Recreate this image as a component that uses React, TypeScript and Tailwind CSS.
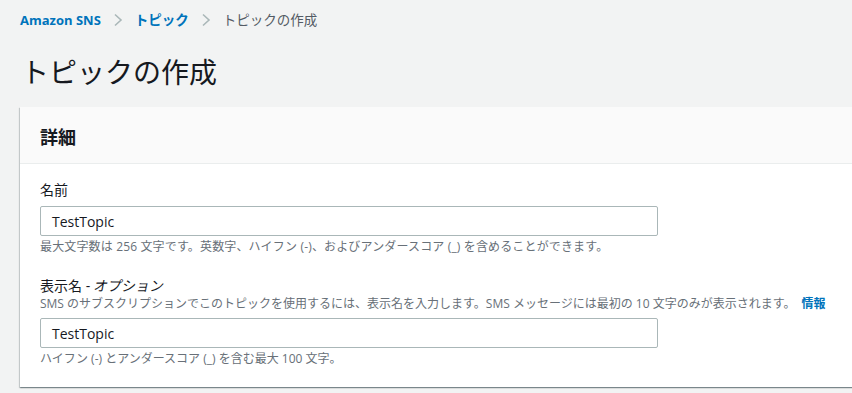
import React from "react";

const font = {
  fontFamily: '"Open Sans", "Noto Sans CJK JP", sans-serif',
};

function Chevron() {
  return (
    <svg width="10" height="14" viewBox="0 0 10 14" className="mx-[12px]">
      <path d="M2 1.5 L8 7 L2 12.5" fill="none" stroke="#aab7b8" strokeWidth="1.6" />
    </svg>
  );
}

export default function App() {
  return (
    <div
      className="w-[852px] h-[393px] overflow-hidden bg-[#f2f3f3] text-[#16191f]"
      style={font}
    >
      <div className="pl-[20px] pt-[11px] flex items-center h-[18px] box-content text-[13px] leading-[18px]">
        <span className="text-[#0073bb] font-bold">Amazon SNS</span>
        <Chevron />
        <span className="text-[#0073bb] font-bold text-[13.5px]">トピック</span>
        <Chevron />
        <span className="text-[#545b64] text-[13.5px]">トピックの作成</span>
      </div>
      <h1 className="pl-[21px] mt-[25px] text-[28px] leading-[36px] font-normal">
        トピックの作成
      </h1>
      <div className="ml-[20px] mt-[17px] w-[900px] bg-white shadow-[0_1px_1px_0_rgba(0,28,36,0.3),1px_1px_1px_0_rgba(0,28,36,0.15),-1px_1px_1px_0_rgba(0,28,36,0.15)]">
        <div className="h-[57px] bg-[#fafafa] border-b border-[#eaeded] flex items-center pl-[20px]">
          <h2 className="text-[18px] font-bold leading-[24px] pt-[3px]">詳細</h2>
        </div>
        <div className="pl-[20px] pt-[16px] pb-[20px]">
          <div className="text-[14px] leading-[20px]">名前</div>
          <div className="mt-[6px] w-[618px] h-[30px] border border-[#aab7b8] rounded-[2px] flex items-center pl-[11px] text-[14px] font-medium">
            TestTopic
          </div>
          <div className="mt-[3px] text-[12px] leading-[16px] tracking-[0.15px] text-[#687078]">
            最大文字数は 256 文字です。英数字、ハイフン (-)、およびアンダースコア (_) を含めることができます。
          </div>
          <div className="mt-[21px] text-[14px] leading-[20px]">
            表示名 - <span className="inline-block -skew-x-[12deg]">オプション</span>
          </div>
          <div className="text-[12px] leading-[16px] text-[#687078]">
            SMS のサブスクリプションでこのトピックを使用するには、表示名を入力します。SMS メッセージには最初の 10 文字のみが表示されます。
            <span className="ml-[6px] text-[#0073bb] font-bold">情報</span>
          </div>
          <div className="mt-[6px] w-[618px] h-[30px] border border-[#aab7b8] rounded-[2px] flex items-center pl-[11px] text-[14px] font-medium">
            TestTopic
          </div>
          <div className="mt-[3px] text-[12px] leading-[16px] text-[#687078]">
            ハイフン (-) とアンダースコア (_) を含む最大 100 文字。
          </div>
        </div>
      </div>
    </div>
  );
}
